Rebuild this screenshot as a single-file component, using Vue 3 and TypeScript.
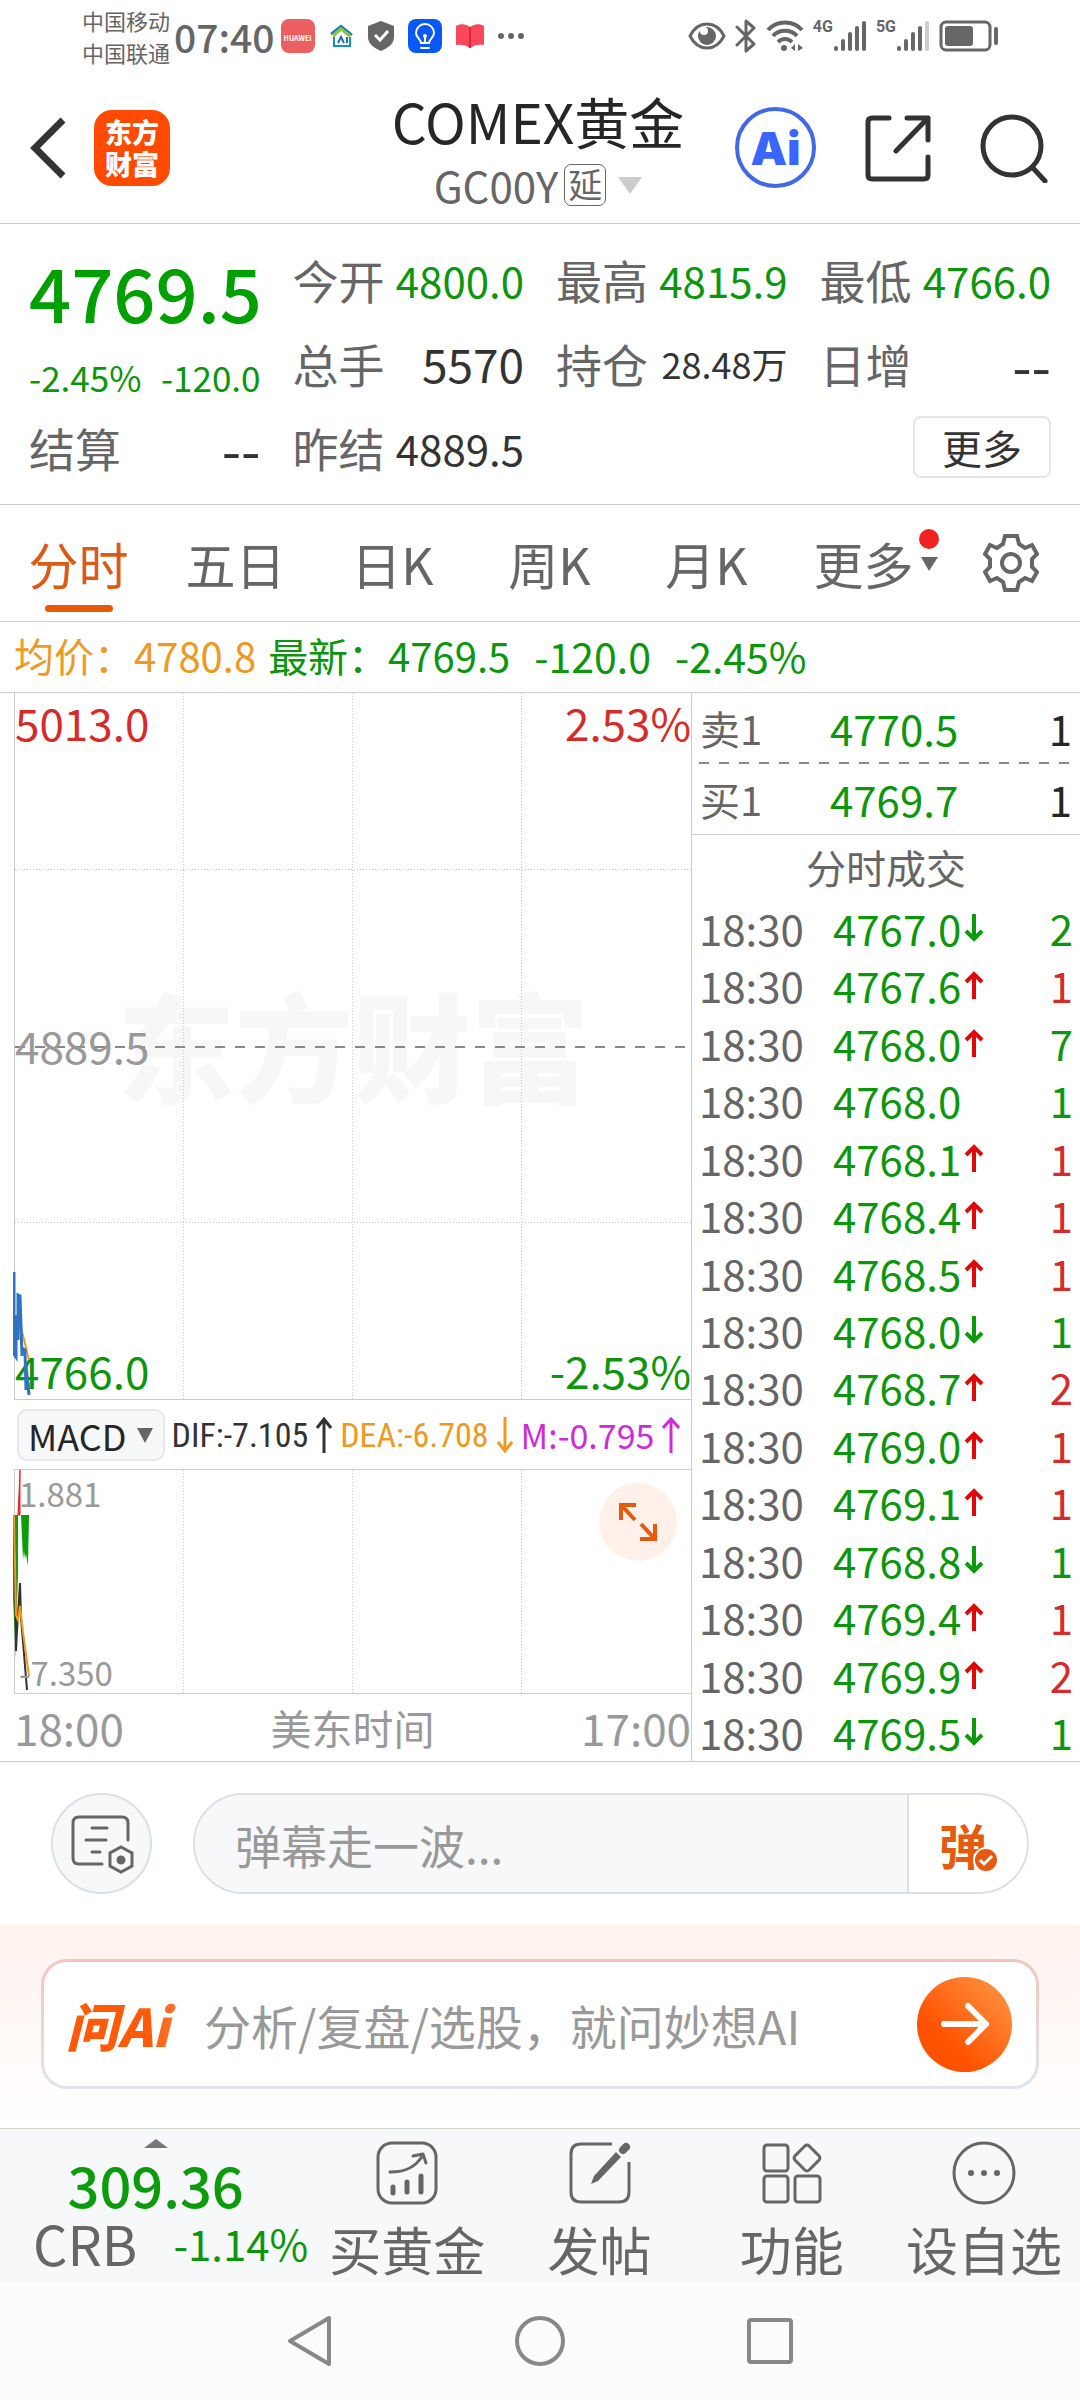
<script setup lang="ts">
interface Quote {
  label: string
  value: string
  tone?: 'down'
  size?: 'large' | 'small' | 'dash'
}

interface Trade {
  time: string
  price: string
  dir: 'up' | 'down' | ''
  qty: number
  tone: 'rise' | 'fall'
}

const quotes: Quote[] = [
  { label: '今开', value: '4800.0', tone: 'down' },
  { label: '最高', value: '4815.9', tone: 'down' },
  { label: '最低', value: '4766.0', tone: 'down' },
  { label: '总手', value: '5570', size: 'large' },
  { label: '持仓', value: '28.48万', size: 'small' },
  { label: '日增', value: '--', size: 'dash' },
  { label: '结算', value: '--', size: 'dash' },
  { label: '昨结', value: '4889.5' },
]

const tabs: string[] = ['分时', '五日', '日K', '周K', '月K']

const book = [
  { side: '卖1', price: '4770.5', qty: 1 },
  { side: '买1', price: '4769.7', qty: 1 },
]

const trades: Trade[] = [
  { time: '18:30', price: '4767.0', dir: 'down', qty: 2, tone: 'fall' },
  { time: '18:30', price: '4767.6', dir: 'up', qty: 1, tone: 'rise' },
  { time: '18:30', price: '4768.0', dir: 'up', qty: 7, tone: 'fall' },
  { time: '18:30', price: '4768.0', dir: '', qty: 1, tone: 'fall' },
  { time: '18:30', price: '4768.1', dir: 'up', qty: 1, tone: 'rise' },
  { time: '18:30', price: '4768.4', dir: 'up', qty: 1, tone: 'rise' },
  { time: '18:30', price: '4768.5', dir: 'up', qty: 1, tone: 'rise' },
  { time: '18:30', price: '4768.0', dir: 'down', qty: 1, tone: 'fall' },
  { time: '18:30', price: '4768.7', dir: 'up', qty: 2, tone: 'rise' },
  { time: '18:30', price: '4769.0', dir: 'up', qty: 1, tone: 'rise' },
  { time: '18:30', price: '4769.1', dir: 'up', qty: 1, tone: 'rise' },
  { time: '18:30', price: '4768.8', dir: 'down', qty: 1, tone: 'fall' },
  { time: '18:30', price: '4769.4', dir: 'up', qty: 1, tone: 'rise' },
  { time: '18:30', price: '4769.9', dir: 'up', qty: 2, tone: 'rise' },
  { time: '18:30', price: '4769.5', dir: 'down', qty: 1, tone: 'fall' },
]
</script>

<template>
  <div class="app">
    <div class="status">
      <div class="carriers"><span>中国移动</span><span>中国联通</span></div>
      <span class="clock">07:40</span>
      <div class="notices">
        <span class="huawei">HUAWEI</span>
        <svg width="24" height="24" viewBox="0 0 24 24" fill="none">
          <path d="M1 10 11 2l11 9" stroke="#1a7fb5" stroke-width="2.500" />
          <path d="M3 12 11 5l9 7" stroke="#8cc63f" stroke-width="3" />
          <path d="M4 13v9h16v-9" stroke="#1790c8" stroke-width="2" />
          <path d="m8 19 3-6 3 6m3-6v6" stroke="#1a6fb5" stroke-width="2" />
        </svg>
        <svg width="28" height="32" viewBox="0 0 28 32">
          <path d="M14 1 27 6v11c0 7-6 11-13 14C7 28 1 24 1 17V6Z" fill="#666" />
          <path d="m8 15 5 5 8-9" fill="none" stroke="#fff" stroke-width="3" />
        </svg>
        <svg width="34" height="34" viewBox="0 0 34 34" fill="none">
          <rect width="34" height="34" rx="8" fill="#0a59f7" />
          <path d="M13 24c0-4-5-5-5-10a9 9 0 0 1 18 0c0 5-5 6-5 10ZM13 29h8M17 24v-7" stroke="#fff" stroke-width="2" stroke-linecap="round" />
          <circle cx="17" cy="17" r="2" fill="#fff" />
        </svg>
        <svg width="30" height="26" viewBox="0 0 30 26">
          <path d="M1 3c5-3 10-2 14 1 4-3 9-4 14-1v19c-5-1-10 0-14 3-4-3-9-4-14-3Z" fill="#f8485a" />
          <path d="M15 4v21" stroke="#d5283f" stroke-width="2" />
        </svg>
        <svg width="26" height="6" viewBox="0 0 26 6" fill="#666">
          <circle cx="3" cy="3" r="3" /><circle cx="13" cy="3" r="3" /><circle cx="23" cy="3" r="3" />
        </svg>
      </div>
      <div class="signals">
        <svg width="38" height="28" viewBox="0 0 38 28">
          <path d="M2 14C10-2 28-2 36 14 28 30 10 30 2 14Z" fill="none" stroke="#666" stroke-width="3" />
          <circle cx="19" cy="14" r="9" fill="#666" /><circle cx="16" cy="9" r="4" fill="#fff" />
        </svg>
        <svg width="22" height="34" viewBox="0 0 22 34" fill="none" stroke="#666" stroke-width="3" stroke-linejoin="round" stroke-linecap="round">
          <path d="m2 8 17 17-8 7V2l8 7L2 26" />
        </svg>
        <svg width="38" height="34" viewBox="0 0 38 34" fill="none" stroke="#666" stroke-width="4">
          <path d="M2 11c9-10 25-10 34 0M7 17c6-7 18-7 24 0M12 23c4-4 10-4 14 0" />
          <circle cx="18" cy="29" r="3" fill="#666" stroke="none" />
          <path d="m29 25-4 4 4 3ZM32 25l5 4-5 3Z" fill="#666" stroke="none" />
        </svg>
        <div class="cell">
          <span>4G</span>
          <svg width="34" height="32" viewBox="0 0 34 32" stroke="#666" stroke-width="4" stroke-linecap="round">
            <path d="M3 29v-1M10 29v-8M17 29V14M24 29V8M31 29V3" />
          </svg>
        </div>
        <div class="cell">
          <span>5G</span>
          <svg width="34" height="32" viewBox="0 0 34 32" stroke="#666" stroke-width="4" stroke-linecap="round">
            <path d="M3 29v-1M10 29v-8M17 29V14M24 29V8" /><path d="M31 29V3" stroke="#ccc" />
          </svg>
        </div>
        <svg width="60" height="32" viewBox="0 0 60 32">
          <rect x="2" y="2" width="49" height="28" rx="5" fill="none" stroke="#666" stroke-width="3" />
          <rect x="6" y="6" width="28" height="20" rx="3" fill="#666" />
          <rect x="55" y="7" width="4" height="18" rx="2" fill="#666" />
        </svg>
      </div>
    </div>

    <header class="header">
      <div class="head-left">
        <button class="plain" aria-label="返回">
          <svg width="38" height="64" viewBox="0 0 38 64" fill="none" stroke="#333" stroke-width="7"><path d="M35 4 7 32l28 28" /></svg>
        </button>
        <a class="brand" href="#"><span>东方</span><span>财富</span></a>
      </div>
      <div class="head-title">
        <h1>COMEX黄金</h1>
        <button class="plain code">
          <span>GC00Y</span><span class="delay">延</span>
          <svg width="24" height="18" viewBox="0 0 24 18"><path d="M0 1h24L12 18Z" fill="#ccc" /></svg>
        </button>
      </div>
      <div class="head-right">
        <button class="plain ai" aria-label="AI">Ai</button>
        <button class="plain" aria-label="分享">
          <svg width="66" height="68" viewBox="0 0 66 68" fill="none" stroke="#333" stroke-width="5" stroke-linecap="round" stroke-linejoin="round">
            <path d="M24 4H7q-4 0-4 4v53q0 4 4 4h52q4 0 4-4V43M42 4h21v22M63 4 31 37" />
          </svg>
        </button>
        <button class="plain" aria-label="搜索">
          <svg width="68" height="70" viewBox="0 0 68 70" fill="none" stroke="#333" stroke-width="5" stroke-linecap="round">
            <circle cx="32" cy="33" r="29" /><path d="m53 55 12 13" />
          </svg>
        </button>
      </div>
    </header>

    <section class="quote">
      <div class="last">
        <strong>4769.5</strong>
        <div class="change"><span>-2.45%</span><span>-120.0</span></div>
      </div>
      <div v-for="q in quotes" :key="q.label" class="pair">
        <span class="label">{{ q.label }}</span>
        <span class="value" :class="[q.tone, q.size]">{{ q.value }}</span>
      </div>
      <div class="more-cell"><button class="more">更多</button></div>
    </section>

    <nav class="tabs">
      <button v-for="(t, i) in tabs" :key="t" class="plain tab" :class="{ active: i === 0 }">{{ t }}</button>
      <button class="plain tab">
        <span class="tab-more">更多
          <svg class="tab-mark" width="22" height="42" viewBox="0 0 22 42"><circle cx="11" cy="10" r="10" fill="#f02323" /><path d="M3 28h17l-9 14Z" fill="#666" /></svg>
        </span>
      </button>
      <button class="plain tab" aria-label="设置">
        <svg width="56" height="58" viewBox="0 0 56 58" fill="none" stroke="#666" stroke-width="4">
          <path d="M22 2h12l2 8 6 4 7-3 5 9-5 5v8l5 5-5 9-7-3-6 4-2 8H22l-2-8-6-4-7 3-5-9 5-5v-8l-5-5 5-9 7 3 6-4Z" />
          <circle cx="28" cy="29" r="9" />
        </svg>
      </button>
    </nav>

    <div class="info">
      <span class="avg">均价：4780.8</span>
      <span class="fall">最新：4769.5</span>
      <span class="fall wide">-120.0</span>
      <span class="fall wide">-2.45%</span>
    </div>

    <main class="market">
      <div class="charts">
        <div class="plot price-plot">
          <span class="watermark">东方财富</span>
          <svg class="canvas" viewBox="0 0 676 706" preserveAspectRatio="none" fill="none">
            <path d="M168.500 0v706M337.500 0v706M506.500 0v706M0 176.500h676M0 529.500h676" stroke="#c4c4c4" stroke-dasharray="1 2" />
            <path d="M0 354h676" stroke="#888" stroke-width="2" stroke-dasharray="10 10" />
          </svg>
          <span class="tl rise">5013.0</span><span class="tr rise">2.53%</span>
          <span class="ml">4889.5</span>
          <span class="bl fall">4766.0</span><span class="br fall">-2.53%</span>
          <svg class="trace" width="20" height="706" viewBox="0 0 20 706" fill="none">
            <path d="m7 630 9 37" stroke="#f39a1c" stroke-width="2" />
            <path d="M1 579v82l2 3V622l2 25V602l2 1 2 60v-8l3 2 1 40v-24l3 29-1-13" stroke="#2f74c0" stroke-width="3" />
          </svg>
        </div>
        <div class="macd">
          <button class="indicator">MACD
            <svg width="18" height="16" viewBox="0 0 18 16"><path d="M1 1h16L9 16Z" fill="#666" /></svg>
          </button>
          <span class="narrow">DIF:-7.105</span>
          <svg width="16" height="36" viewBox="0 0 16 36" fill="none" stroke="#333" stroke-width="3"><path d="M8 36V2M1 11l7-9 7 9" /></svg>
          <span class="narrow avg">DEA:-6.708</span>
          <svg width="16" height="36" viewBox="0 0 16 36" fill="none" stroke="#ee991f" stroke-width="3"><path d="M8 0v34M1 25l7 9 7-9" /></svg>
          <span class="mvalue">M:-0.795</span>
          <svg width="18" height="36" viewBox="0 0 18 36" fill="none" stroke="#cf2bd9" stroke-width="3"><path d="M9 36V2M1 11l8-9 8 9" /></svg>
        </div>
        <div class="plot macd-plot">
          <svg class="canvas" viewBox="0 0 676 223" preserveAspectRatio="none" fill="none">
            <path d="M168.500 0v223M337.500 0v223M506.500 0v223" stroke="#c4c4c4" stroke-dasharray="1 2" />
          </svg>
          <svg class="trace" width="20" height="223" viewBox="0 0 20 223" fill="none">
            <path d="M0 45h5v60l-1 30-1 54-3-60Z" fill="#0c9c0c" />
            <path d="M8 45h8l-1 51-2-12-1 5-1-8-1 9Z" fill="#0c9c0c" />
            <path d="M7 0v45H5Z" fill="#e02a2a" stroke="#e02a2a" />
            <path d="m1 45 2 136 1-20 3-48 1 35 6 72" stroke="#333" stroke-width="2" />
            <path d="m1 45 2 100 2 5 2-14 3 26 6 44" stroke="#f39a1c" stroke-width="2" />
          </svg>
          <span class="hi">1.881</span><span class="lo">-7.350</span>
          <button class="plain expand" aria-label="全屏">
            <svg width="40" height="40" viewBox="0 0 40 40" fill="none" stroke="#e65a10" stroke-width="4">
              <path d="M3 18V3h15M4 4l13 14M37 22v15H22M36 36 23 22" />
            </svg>
          </button>
        </div>
        <div class="axis"><span>18:00</span><span class="zone">美东时间</span><span>17:00</span></div>
      </div>

      <div class="tape">
        <div v-for="b in book" :key="b.side" class="book">
          <span class="side">{{ b.side }}</span><span class="fall bprice">{{ b.price }}</span><span class="bqty">{{ b.qty }}</span>
        </div>
        <table class="trades">
          <caption>分时成交</caption>
          <tbody>
            <tr v-for="(t, i) in trades" :key="i">
              <td class="time">{{ t.time }}</td>
              <td class="fall tprice">{{ t.price }}</td>
              <td class="dir">
                <svg v-if="t.dir === 'up'" width="20" height="28" viewBox="0 0 20 28" fill="none" stroke="#e00808" stroke-width="4"><path d="M10 28V4M2 11l8-8 8 8" /></svg>
                <svg v-if="t.dir === 'down'" width="20" height="28" viewBox="0 0 20 28" fill="none" stroke="#0a9a0a" stroke-width="4"><path d="M10 0v24M2 17l8 8 8-8" /></svg>
              </td>
              <td class="tqty" :class="t.tone">{{ t.qty }}</td>
            </tr>
          </tbody>
        </table>
      </div>
    </main>

    <section class="danmu">
      <button class="plain round" aria-label="弹幕设置">
        <svg width="64" height="60" viewBox="0 0 64 60" fill="none" stroke="#666" stroke-width="3" stroke-linecap="round">
          <path d="M58 26V9q0-6-6-6H9q-6 0-6 6v35q0 6 6 6h23M22 14h15M16 26h20M22 38h8" />
          <path d="m51 33 11 6v13l-11 6-11-6V39Z" fill="#f7f8fa" /><circle cx="51" cy="46" r="3" fill="#666" />
        </svg>
      </button>
      <div class="pill">
        <input type="text" aria-label="弹幕" placeholder="弹幕走一波..." />
        <button class="plain toggle"><span>弹
          <svg class="check" width="26" height="26" viewBox="0 0 26 26"><circle cx="13" cy="13" r="12" fill="#e65a10" stroke="#fff" stroke-width="2" /><path d="m7 13 4 4 8-8" fill="none" stroke="#fff" stroke-width="3" /></svg>
        </span></button>
      </div>
    </section>

    <section class="ask">
      <div class="ask-card">
        <span class="ask-logo">问Ai</span>
        <input type="text" aria-label="问AI" placeholder="分析/复盘/选股，就问妙想AI" />
        <button class="plain send" aria-label="发送">
          <svg width="48" height="44" viewBox="0 0 48 44" fill="none" stroke="#fff" stroke-width="6" stroke-linecap="round" stroke-linejoin="round"><path d="M3 22h42M27 4l18 18-18 18" /></svg>
        </button>
      </div>
    </section>

    <footer class="bottom">
      <a class="index" href="#">
        <svg width="24" height="9" viewBox="0 0 24 9"><path d="M0 9 12 0l12 9Z" fill="#77777b" /></svg>
        <span class="index-value">309.36</span>
        <span class="index-row"><span class="index-name">CRB</span><span class="index-change">-1.14%</span></span>
      </a>
      <button class="plain action">
        <svg width="64" height="64" viewBox="0 0 64 64" fill="none" stroke="#666" stroke-width="3">
          <rect x="3" y="2" width="58" height="60" rx="14" />
          <path d="M15 31c16 0 26-5 33-17M38 15l10-2 3 9" stroke-linecap="round" stroke-linejoin="round" />
          <path d="M18 46v6M32 41v10M46 35v16" stroke-width="5" stroke-linecap="round" />
        </svg>
        <span>买黄金</span>
      </button>
      <button class="plain action">
        <svg width="64" height="64" viewBox="0 0 64 64" fill="none" stroke="#666" stroke-width="3">
          <path d="M44 3H13Q3 3 3 13v38q0 10 10 10h38q10 0 10-10V21" />
          <path d="m55 9 3-3" stroke-width="8" stroke-linecap="round" /><path d="m48 11 5 5-23 24-7 3 3-8Z" fill="#666" stroke="none" />
        </svg>
        <span>发帖</span>
      </button>
      <button class="plain action">
        <svg width="64" height="64" viewBox="0 0 64 64" fill="none" stroke="#666" stroke-width="3">
          <rect x="4" y="4" width="24" height="26" rx="3" /><rect x="4" y="35" width="24" height="26" rx="3" /><rect x="35" y="35" width="25" height="26" rx="3" />
          <rect x="37" y="7" width="20" height="20" rx="3" transform="rotate(45 47 17)" />
        </svg>
        <span>功能</span>
      </button>
      <button class="plain action">
        <svg width="64" height="64" viewBox="0 0 64 64" fill="#666">
          <circle cx="32" cy="32" r="30" fill="none" stroke="#666" stroke-width="3" />
          <circle cx="19" cy="32" r="3" /><circle cx="32" cy="32" r="3" /><circle cx="45" cy="32" r="3" />
        </svg>
        <span>设自选</span>
      </button>
    </footer>

    <nav class="system">
      <button class="plain" aria-label="后退"><svg width="46" height="52" viewBox="0 0 46 52" fill="none" stroke="#888" stroke-width="4" stroke-linejoin="round"><path d="M42 3v46L3 26Z" /></svg></button>
      <button class="plain" aria-label="主页"><svg width="52" height="52" viewBox="0 0 52 52" fill="none" stroke="#888" stroke-width="4"><circle cx="26" cy="26" r="23" /></svg></button>
      <button class="plain" aria-label="最近任务"><svg width="46" height="46" viewBox="0 0 46 46" fill="none" stroke="#888" stroke-width="4"><rect x="2" y="2" width="42" height="42" rx="2" /></svg></button>
    </nav>
  </div>
</template>

<style>
body {
  margin: 0;
  background: #fff;
}
</style>

<style scoped>
.app {
  font-family: "Noto Sans CJK SC", "Noto Sans", sans-serif;
  color: #333;
  background: #fff;
  overflow: hidden;
  white-space: nowrap;
}
.app * {
  box-sizing: border-box;
}
svg {
  display: block;
  flex: none;
}
button,
input {
  font: inherit;
  color: inherit;
}
a {
  color: inherit;
  text-decoration: none;
}
.plain {
  padding: 0;
  border: 0;
  background: none;
}
.rise {
  color: #d62b2b;
}
.fall,
.down {
  color: #0c960c;
}
.avg {
  color: #ee991f;
}

.status {
  display: flex;
  align-items: center;
  height: 72px;
  padding: 0 81px 0 82px;
  color: #666;
}
.carriers {
  display: flex;
  flex-direction: column;
  font-size: 22px;
  line-height: 32px;
}
.clock {
  margin-left: 4px;
  font-size: 39px;
  font-weight: 500;
  line-height: 64px;
}
.notices {
  display: flex;
  align-items: center;
  gap: 13px;
  margin-left: 6px;
}
.huawei {
  width: 34px;
  height: 34px;
  margin-right: 2px;
  border-radius: 8px;
  background: #ec5f60;
  color: #fff;
  font-size: 7px;
  font-weight: 700;
  line-height: 38px;
  text-align: center;
}
.signals {
  display: flex;
  align-items: center;
  gap: 9px;
  margin-left: auto;
}
.cell {
  display: flex;
  align-items: flex-start;
}
.cell span {
  font-family: "Roboto", sans-serif;
  font-size: 16px;
  font-weight: 700;
  line-height: 14px;
}

.header {
  display: grid;
  grid-template-columns: 1fr auto 1fr;
  align-items: center;
  height: 152px;
  padding: 0 32px 0 28px;
  border-bottom: 1px solid #ccc;
}
.head-left,
.head-right {
  display: flex;
  align-items: center;
}
.head-left {
  gap: 28px;
}
.head-right {
  justify-content: flex-end;
  gap: 49px;
}
.brand {
  display: flex;
  flex-direction: column;
  align-items: center;
  justify-content: center;
  width: 76px;
  height: 76px;
  border-radius: 18px;
  background: #ff4a00;
  color: #fff;
  font-size: 27px;
  font-weight: 900;
  line-height: 32px;
}
.head-title {
  display: flex;
  flex-direction: column;
  align-items: center;
  padding-top: 4px;
}
h1 {
  margin: 0;
  color: #262626;
  font-size: 55px;
  font-weight: 400;
  line-height: 70px;
}
.code {
  display: flex;
  align-items: center;
  gap: 6px;
  color: #666;
  font-size: 42px;
  line-height: 60px;
}
.delay {
  width: 42px;
  height: 42px;
  margin-right: 6px;
  border: 1px solid #666;
  border-radius: 7px;
  font-size: 34px;
  line-height: 38px;
  text-align: center;
}
.ai {
  width: 81px;
  height: 81px;
  border: 4px solid #4169e6;
  border-radius: 50%;
  color: #3a66ff;
  font-family: "Inter", sans-serif;
  font-size: 46px;
  font-weight: 900;
}

.quote {
  display: grid;
  grid-template-columns: repeat(4, minmax(0, 1fr));
  grid-auto-rows: 84px;
  column-gap: 32px;
  padding: 13px 29px 15px;
  border-bottom: 1px solid #ccc;
}
.last {
  grid-row: span 2;
  color: #00a000;
}
.last strong {
  display: block;
  font-size: 74px;
  font-weight: 500;
  line-height: 108px;
}
.change {
  display: flex;
  justify-content: space-between;
  color: #0c960c;
  font-size: 35px;
  line-height: 64px;
}
.pair,
.more-cell {
  display: flex;
  align-items: center;
  justify-content: space-between;
}
.more-cell {
  grid-column: 4;
  justify-content: flex-end;
}
.label {
  color: #666;
  font-size: 46px;
}
.value {
  font-size: 42px;
}
.value.large {
  font-size: 46px;
}
.value.small {
  font-size: 36px;
}
.value.dash {
  font-size: 56px;
}
.more {
  width: 138px;
  height: 62px;
  padding: 0;
  border: 2px solid #e6e6e6;
  border-radius: 8px;
  background: #fff;
  font-size: 40px;
  line-height: 54px;
}

.tabs {
  display: grid;
  grid-template-columns: repeat(6, 157fr) 138fr;
  height: 117px;
  border-bottom: 1px solid #ccc;
}
.tab {
  position: relative;
  display: flex;
  align-items: center;
  justify-content: center;
  color: #666;
  font-size: 50px;
}
.tab.active {
  color: #dc5a14;
}
.tab.active::after {
  content: "";
  position: absolute;
  left: 50%;
  bottom: 9px;
  width: 68px;
  height: 7px;
  margin-left: -34px;
  border-radius: 4px;
  background: #e65a0a;
}
.tab-more {
  position: relative;
}
.tab-mark {
  position: absolute;
  top: 2px;
  left: 104px;
}

.info {
  display: flex;
  height: 71px;
  padding-left: 14px;
  border-bottom: 1px solid #ccc;
  font-size: 40px;
  line-height: 66px;
}
.info .fall {
  margin-left: 12px;
}
.info .wide {
  margin-left: 24px;
  font-size: 41px;
}

.market {
  display: grid;
  grid-template-columns: minmax(0, 692fr) minmax(0, 388fr);
  border-bottom: 1px solid #ccc;
}
.charts {
  padding-left: 14px;
  border-right: 1px solid #ccc;
}
.plot {
  position: relative;
  border-left: 1px solid #ccc;
  border-bottom: 1px solid #ccc;
  font-size: 44px;
  line-height: 50px;
}
.plot > * {
  position: absolute;
}
.price-plot {
  height: 707px;
}
.canvas {
  top: 0;
  left: 0;
  width: 100%;
  height: 100%;
}
.trace {
  top: 0;
  left: -2px;
}
.watermark {
  top: 270px;
  left: 0;
  right: 0;
  color: #f7f7f7;
  font-size: 118px;
  font-weight: 900;
  line-height: 160px;
  text-align: center;
}
.tl,
.tr {
  top: 4px;
}
.tl,
.ml,
.bl {
  left: 0;
}
.tr,
.br {
  right: 0;
}
.ml {
  top: 327px;
  color: #999;
}
.bl,
.br {
  bottom: 4px;
}
.macd {
  display: flex;
  align-items: center;
  height: 69px;
  padding-left: 3px;
  font-size: 34px;
}
.indicator {
  display: flex;
  align-items: center;
  gap: 10px;
  height: 52px;
  margin-right: 6px;
  padding: 0 9px;
  border: 2px solid #e8e8ea;
  border-radius: 10px;
  background: #f7f8fa;
  color: #262626;
  font-size: 36px;
  line-height: 44px;
}
.macd > svg {
  margin: 0 8px;
}
.narrow {
  font-family: "Liberation Sans Narrow", "Roboto Condensed", "Liberation Sans", sans-serif;
  font-size: 34px;
}
.mvalue {
  color: #cf2bd9;
}
.macd-plot {
  height: 225px;
  border-top: 1px solid #ccc;
}
.hi,
.lo {
  left: 4px;
  color: #999;
  font-size: 33px;
}
.hi {
  top: -2px;
}
.lo {
  bottom: -4px;
}
.expand {
  top: 13px;
  right: 14px;
  display: flex;
  align-items: center;
  justify-content: center;
  width: 78px;
  height: 78px;
  border-radius: 50%;
  background: #fff0e9;
}
.axis {
  display: flex;
  justify-content: space-between;
  height: 67px;
  color: #999;
  font-size: 44px;
  line-height: 66px;
}
.zone {
  font-size: 41px;
}

.tape {
  display: flex;
  flex-direction: column;
  font-size: 42px;
}
.book {
  display: flex;
  height: 71px;
  padding: 0 8px;
  line-height: 70px;
  background: repeating-linear-gradient(90deg, #888 0 10px, transparent 10px 20px) 7px 100% / 370px 2px no-repeat;
}
.book + .book {
  border-bottom: 1px solid #ccc;
  background: none;
}
.side {
  width: 130px;
  color: #666;
  font-size: 40px;
}
.bqty {
  flex: 1;
  color: #262626;
  text-align: right;
}
.trades {
  display: flex;
  flex: 1;
  flex-direction: column;
  border-spacing: 0;
}
.trades caption {
  display: block;
  color: #666;
  font-size: 40px;
  line-height: 64px;
  text-align: center;
}
.trades tbody {
  display: flex;
  flex: 1;
  flex-direction: column;
}
.trades tr {
  display: flex;
  flex: 1;
  align-items: center;
  padding: 0 7px;
  line-height: 56px;
}
.trades td {
  padding: 0;
}
.time {
  width: 134px;
  color: #666;
}
.tprice {
  width: 131px;
}
.tqty {
  flex: 1;
  text-align: right;
}

.danmu {
  display: flex;
  align-items: center;
  gap: 41px;
  height: 163px;
  padding: 0 51px;
}
.round {
  display: flex;
  align-items: center;
  justify-content: center;
  width: 101px;
  height: 101px;
  border: 2px solid #dcdfe4;
  border-radius: 50%;
  background: #f7f8fa;
}
.pill {
  display: flex;
  flex: 1;
  height: 101px;
  border: 2px solid #dcdfe4;
  border-radius: 51px;
  overflow: hidden;
}
.pill input {
  flex: 1;
  min-width: 0;
  padding: 0 40px;
  border: 0;
  background: #f7f8fa;
  font-size: 46px;
}
input::placeholder {
  color: #999;
  opacity: 1;
}
.toggle {
  width: 120px;
  padding-right: 10px;
  border-left: 2px solid #dcdfe4;
  color: #e65a10;
  font-size: 48px;
  font-weight: 700;
  line-height: 90px;
}
.toggle span {
  position: relative;
}
.check {
  position: absolute;
  right: -12px;
  bottom: 6px;
}

.ask {
  height: 203px;
  padding: 34px 41px 0;
  background: linear-gradient(#fff2ee, #fff);
}
.ask-card {
  display: flex;
  align-items: center;
  height: 130px;
  padding: 0 24px 0 22px;
  border: 3px solid transparent;
  border-radius: 26px;
  background: linear-gradient(#fff, #fff) padding-box, linear-gradient(#f4c4bb, #dfe4f2) border-box;
}
.ask-logo {
  width: 138px;
  background: linear-gradient(90deg, #ff5a08 60%, #ff9060) text;
  color: transparent;
  font-size: 52px;
  font-style: italic;
  font-weight: 900;
}
.ask input {
  flex: 1;
  min-width: 0;
  padding: 0;
  border: 0;
  background: none;
  font-size: 47px;
}
.send {
  display: flex;
  align-items: center;
  justify-content: center;
  width: 95px;
  height: 95px;
  border-radius: 50%;
  background: linear-gradient(45deg, #ff5200 30%, #ff9a48);
}

.bottom {
  display: grid;
  grid-template-columns: 311fr repeat(4, 192fr);
  height: 154px;
  border-top: 1px solid #d0d8d0;
  background: #f7f8fa;
  color: #666;
}
.index {
  display: flex;
  flex-direction: column;
  align-items: center;
  padding-top: 10px;
}
.index-value {
  color: #0a9c0a;
  font-size: 56px;
  font-weight: 500;
  line-height: 72px;
}
.index-row {
  display: flex;
  align-items: center;
  justify-content: space-between;
  align-self: stretch;
  height: 44px;
  padding: 0 3px 0 33px;
}
.index-name {
  font-size: 54px;
}
.index-change {
  color: #0c960c;
  font-size: 42px;
}
.action {
  display: flex;
  flex-direction: column;
  align-items: center;
  padding-top: 12px;
  font-size: 52px;
  line-height: 88px;
}

.system {
  display: flex;
  align-items: center;
  justify-content: center;
  gap: 181px;
  height: 118px;
  background: #fbfbfb;
}
</style>
